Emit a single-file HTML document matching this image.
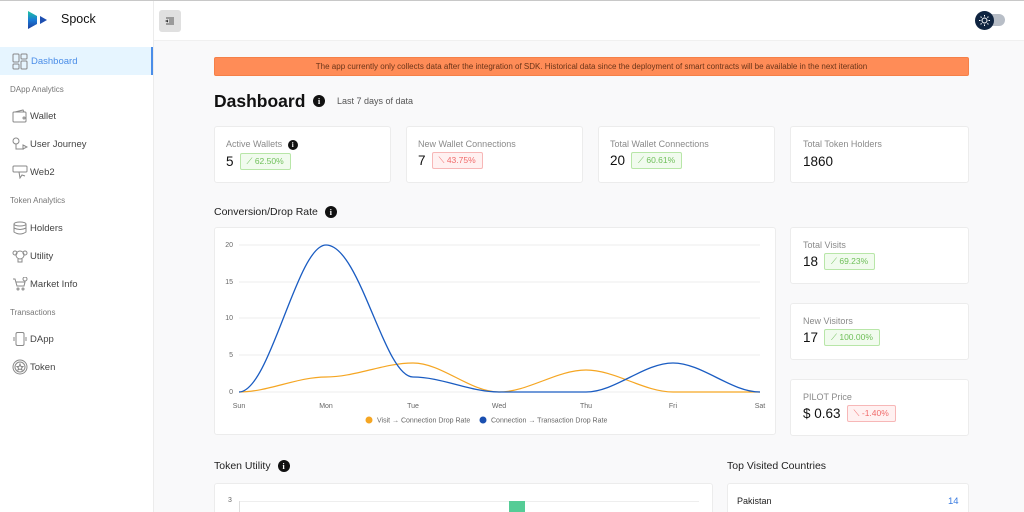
<!DOCTYPE html>
<html><head><meta charset="utf-8"><style>
*{box-sizing:border-box;margin:0;padding:0}
html,body{width:1024px;height:512px;overflow:hidden}
body{background:#f9f9fa;font-family:"Liberation Sans",sans-serif;position:relative;color:#111}
.topline{position:absolute;left:0;top:0;width:1024px;height:1px;background:#c8c8c8}
.side{position:absolute;left:0;top:1px;width:154px;height:511px;background:#fff;border-right:1px solid #ececec}
.header{position:absolute;left:154px;top:1px;width:870px;height:40px;background:#fff;border-bottom:1px solid #f0f0f0}
.nav{position:absolute;left:0;width:153px;height:28px;font-size:9.5px;color:#444;display:flex;align-items:center;padding-left:12px}
.nav svg{margin-right:2px}
.sec{position:absolute;left:10px;font-size:8px;color:#777}
.card{position:absolute;background:#fff;border:1px solid #ececec;border-radius:3px}
.lbl{font-size:9px;color:#8a8a8a}
.val{font-size:13.5px;color:#111}
.badge{display:inline-block;font-size:8.5px;padding:2px 6px;border-radius:2px;margin-left:6px;vertical-align:2px}
.up{color:#6fbf5a;background:#f1fbee;border:1px solid #b8e6a8}
.dn{color:#f06b6b;background:#fff1f1;border:1px solid #f7b7b7}
.info{display:inline-block;width:12px;height:12px;border-radius:50%;background:#111;color:#fff;font-size:8.5px;font-weight:bold;text-align:center;line-height:12px;font-family:"Liberation Serif",serif;vertical-align:middle}
.ttl{position:absolute;font-size:10.5px;color:#222}
.ax{font-size:7px;fill:#666;font-family:"Liberation Sans",sans-serif}
</style></head><body>
<div class="topline"></div>
<div class="side">
 <svg style="position:absolute;left:28px;top:10px" width="22" height="18"><defs><linearGradient id="g" x1="0" y1="0" x2="0" y2="1"><stop offset="0" stop-color="#1fc6a0"/><stop offset=".5" stop-color="#1a7ad6"/><stop offset="1" stop-color="#1d3f9e"/></linearGradient></defs><path d="M0 0 L9 5 L9 13 L0 18Z" fill="url(#g)"/><path d="M12 5 L19 9 L12 13Z" fill="#1d4fb0"/></svg>
 <div style="position:absolute;left:61px;top:11px;font-size:12.5px;color:#111">Spock</div>
 <div class="nav" style="top:46px;background:#e6f5ff;color:#4a8de8;border-right:2px solid #4a8de8"><svg width="17" height="17" viewBox="0 0 17 17" fill="none" stroke="#888" stroke-width="1"><rect x="1" y="1" width="6" height="8" rx="1"/><rect x="9" y="1" width="6" height="5" rx="1"/><rect x="1" y="11" width="6" height="5" rx="1"/><rect x="9" y="8" width="6" height="8" rx="1"/></svg>Dashboard</div>
 <div class="sec" style="top:84px">DApp Analytics</div>
 <div class="nav" style="top:101px"><svg width="16" height="14" viewBox="0 0 16 14" fill="none" stroke="#888"><rect x="1" y="3" width="13" height="10" rx="1"/><path d="M3 3 L11 1 L12 3"/><circle cx="12" cy="9" r="1"/></svg>Wallet</div>
 <div class="nav" style="top:129px"><svg width="16" height="14" viewBox="0 0 16 14" fill="none" stroke="#888"><circle cx="4" cy="4" r="3"/><path d="M4 7 V12 H12 M11 8 L15 10 L11 12Z"/></svg>User Journey</div>
 <div class="nav" style="top:157px"><svg width="16" height="14" viewBox="0 0 16 14" fill="none" stroke="#888"><rect x="1" y="1" width="14" height="6" rx="1"/><path d="M7 7 L8 13 L10 10 L13 11"/></svg>Web2</div>
 <div class="sec" style="top:195px">Token Analytics</div>
 <div class="nav" style="top:213px"><svg width="16" height="14" viewBox="0 0 16 14" fill="none" stroke="#888"><ellipse cx="8" cy="3" rx="6" ry="2"/><path d="M2 3 V11 Q8 15 14 11 V3 M2 7 Q8 10 14 7"/></svg>Holders</div>
 <div class="nav" style="top:241px"><svg width="16" height="14" viewBox="0 0 16 14" fill="none" stroke="#888"><circle cx="8" cy="6" r="4"/><circle cx="3" cy="4" r="2"/><circle cx="13" cy="4" r="2"/><path d="M6 10 V13 H10 V10"/></svg>Utility</div>
 <div class="nav" style="top:269px"><svg width="16" height="14" viewBox="0 0 16 14" fill="none" stroke="#888"><path d="M1 2 H3 L5 9 H12 L13 5 H4"/><circle cx="6" cy="12" r="1"/><circle cx="11" cy="12" r="1"/><circle cx="13" cy="2" r="2"/></svg>Market Info</div>
 <div class="sec" style="top:307px">Transactions</div>
 <div class="nav" style="top:324px"><svg width="16" height="14" viewBox="0 0 16 14" fill="none" stroke="#888"><rect x="4" y="0.5" width="8" height="13" rx="1.5"/><path d="M2 5 V9 M14 5 V9"/></svg>DApp</div>
 <div class="nav" style="top:352px"><svg width="16" height="16" viewBox="0 0 16 16" fill="none" stroke="#888"><circle cx="8" cy="8" r="7"/><circle cx="8" cy="8" r="5"/><path d="M8 5 L9 7.5 L11 7.5 L9.5 9 L10 11 L8 10 L6 11 L6.5 9 L5 7.5 L7 7.5Z"/></svg>Token</div>
</div>
<div class="header">
 <div style="position:absolute;left:5px;top:9px;width:22px;height:22px;background:#e0e0e0;border-radius:3px"><svg width="22" height="22" viewBox="0 0 22 22" stroke="#555" stroke-width="1"><path d="M7 8 H15 M10 10 H15 M10 12 H15 M7 14 H15 M9 10 L7 11 L9 12"/></svg></div>
 <div style="position:absolute;left:831px;top:13px;width:20px;height:12px;background:#b8bec7;border-radius:6px"></div>
 <div style="position:absolute;left:821px;top:10px;width:19px;height:19px;border-radius:50%;background:#0f2440"><svg width="19" height="19" viewBox="0 0 19 19" stroke="#fff" fill="none" stroke-width="1"><circle cx="9.5" cy="9.5" r="2.5"/><path d="M9.5 4 V5.5 M9.5 13.5 V15 M4 9.5 H5.5 M13.5 9.5 H15 M5.6 5.6 L6.6 6.6 M12.4 12.4 L13.4 13.4 M5.6 13.4 L6.6 12.4 M12.4 6.6 L13.4 5.6"/></svg></div>
</div>
<div style="position:absolute;left:214px;top:57px;width:755px;height:19px;background:#ff8c57;border-radius:2px;border:1px solid #f58048;font-size:8px;color:#6a3418;text-align:center;line-height:17px;white-space:nowrap">The app currently only collects data after the integration of SDK. Historical data since the deployment of smart contracts will be available in the next iteration</div>
<div style="position:absolute;left:214px;top:91px;font-size:17.5px;font-weight:bold;color:#111">Dashboard</div>
<span class="info" style="position:absolute;left:313px;top:95px">i</span>
<div style="position:absolute;left:337px;top:96px;font-size:9px;color:#555">Last 7 days of data</div>

<div class="card" style="left:214px;top:126px;width:177px;height:57px;padding:12px 11px"><div class="lbl">Active Wallets <span class="info" style="width:10px;height:10px;line-height:10px;font-size:7px;margin-left:3px">i</span></div><div style="margin-top:3px"><span class="val">5</span><span class="badge up">⟋ 62.50%</span></div></div>
<div class="card" style="left:406px;top:126px;width:177px;height:57px;padding:12px 11px"><div class="lbl">New Wallet Connections</div><div style="margin-top:3px"><span class="val">7</span><span class="badge dn">⟍ 43.75%</span></div></div>
<div class="card" style="left:598px;top:126px;width:177px;height:57px;padding:12px 11px"><div class="lbl">Total Wallet Connections</div><div style="margin-top:3px"><span class="val">20</span><span class="badge up">⟋ 60.61%</span></div></div>
<div class="card" style="left:790px;top:126px;width:179px;height:57px;padding:12px 12px"><div class="lbl">Total Token Holders</div><div style="margin-top:4px"><span class="val">1860</span></div></div>

<div class="ttl" style="left:214px;top:206px">Conversion/Drop Rate <span class="info" style="margin-left:4px">i</span></div>
<div class="card" style="left:214px;top:227px;width:562px;height:208px"></div>
<svg style="position:absolute;left:0;top:0" width="1024" height="512">
 <g stroke="#eee" stroke-width="1"><path d="M239 245H760M239 282H760M239 318H760M239 355H760M239 392H760"/></g>
 <g class="ax" text-anchor="end"><text x="233" y="247">20</text><text x="233" y="284">15</text><text x="233" y="320">10</text><text x="233" y="357">5</text><text x="233" y="394">0</text></g>
 <g class="ax" text-anchor="middle"><text x="239" y="408">Sun</text><text x="326" y="408">Mon</text><text x="413" y="408">Tue</text><text x="499" y="408">Wed</text><text x="586" y="408">Thu</text><text x="673" y="408">Fri</text><text x="760" y="408">Sat</text></g>
 <path d="M239,392 C268,392 297,377 326,377 C355,377 384,363 413,363 C442,363 470,392 499,392 C528,392 557,370 586,370 C615,370 644,392 673,392 L760,392" fill="none" stroke="#f5a623" stroke-width="1.2"/>
 <path d="M239,392 C270,392 297,245 326,245 C360,245 384,377 413,377 C442,377 470,392 499,392 L586,392 C615,392 644,363 673,363 C702,363 731,392 760,392" fill="none" stroke="#1a5cc2" stroke-width="1.3"/>
 <circle cx="369" cy="420" r="3.5" fill="#f5a623"/><text class="ax" x="377" y="422.5">Visit → Connection Drop Rate</text>
 <circle cx="483" cy="420" r="3.5" fill="#1a4fb0"/><text class="ax" x="491" y="422.5">Connection → Transaction Drop Rate</text>
</svg>

<div class="card" style="left:790px;top:227px;width:179px;height:57px;padding:12px 12px"><div class="lbl">Total Visits</div><div style="margin-top:3px"><span class="val">18</span><span class="badge up">⟋ 69.23%</span></div></div>
<div class="card" style="left:790px;top:303px;width:179px;height:57px;padding:12px 12px"><div class="lbl">New Visitors</div><div style="margin-top:3px"><span class="val">17</span><span class="badge up">⟋ 100.00%</span></div></div>
<div class="card" style="left:790px;top:379px;width:179px;height:57px;padding:12px 12px"><div class="lbl">PILOT Price</div><div style="margin-top:3px"><span class="val">$ 0.63</span><span class="badge dn">⟍ -1.40%</span></div></div>

<div class="ttl" style="left:214px;top:460px">Token Utility <span class="info" style="margin-left:4px">i</span></div>
<div class="card" style="left:214px;top:483px;width:499px;height:40px"></div>
<div style="position:absolute;left:228px;top:497px;font-size:7px;color:#666">3</div>
<div style="position:absolute;left:239px;top:501px;width:460px;height:1px;background:#eee"></div>
<div style="position:absolute;left:239px;top:501px;width:1px;height:11px;background:#ddd"></div>
<div style="position:absolute;left:509px;top:501px;width:16px;height:11px;background:#55cc96"></div>
<div class="ttl" style="left:727px;top:460px">Top Visited Countries</div>
<div class="card" style="left:727px;top:483px;width:242px;height:40px"></div>
<div style="position:absolute;left:737px;top:496px;font-size:9px;color:#222">Pakistan</div>
<div style="position:absolute;left:948px;top:496px;font-size:9.5px;color:#3a7be0">14</div>
</body></html>
